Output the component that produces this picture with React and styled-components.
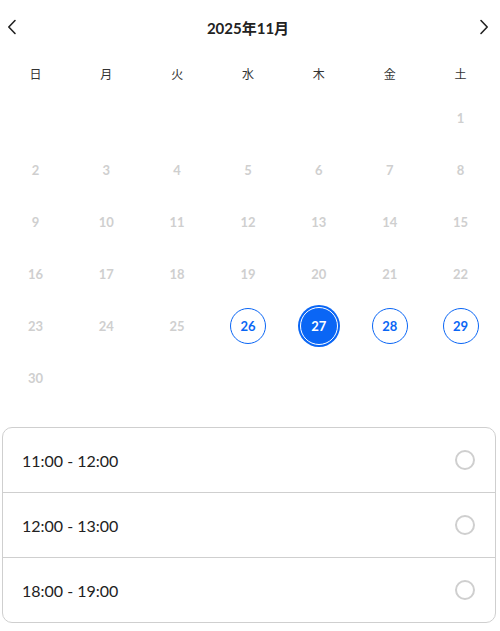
import React, { useState } from "react";
import styled, { createGlobalStyle } from "styled-components";

const GlobalStyle = createGlobalStyle`
  body {
    margin: 0;
    background: #fff;
    font-family: "Lato", "Noto Sans CJK JP", sans-serif;
  }
`;

const Page = styled.div`
  width: 496px;
  padding: 0 2px 0 0;
`;

const Header = styled.div`
  display: flex;
  align-items: center;
  justify-content: space-between;
  height: 54px;
  padding: 0 4px;
`;

const NavButton = styled.button`
  border: none;
  background: none;
  padding: 0;
  width: 16px;
  height: 20px;
  display: flex;
  align-items: center;
  justify-content: center;
  color: #222;
  cursor: pointer;
`;

const Title = styled.div`
  font-size: 15px;
  font-weight: 700;
  color: #222;
`;

const Grid = styled.div`
  display: grid;
  grid-template-columns: repeat(7, 1fr);
`;

const Weekday = styled.div`
  height: 38px;
  display: flex;
  align-items: center;
  justify-content: center;
  font-size: 12px;
  color: #333;
  font-family: "Noto Sans CJK JP", sans-serif;
`;

const Cell = styled.div`
  height: 52px;
  display: flex;
  align-items: center;
  justify-content: center;
`;

const Day = styled.div`
  width: 36px;
  height: 36px;
  box-sizing: border-box;
  border-radius: 50%;
  display: flex;
  align-items: center;
  justify-content: center;
  font-size: 13px;
  font-weight: 700;
  color: ${(p) => (p.$selected ? "#fff" : p.$available ? "#0a66f5" : "#cfcfcf")};
  border: ${(p) => (p.$available ? "1px solid #0a66f5" : "none")};
  background: ${(p) => (p.$selected ? "#0a66f5" : "transparent")};
  ${(p) =>
    p.$selected &&
    `
    width: 38px;
    height: 38px;
    border: 1.5px solid #fff;
    box-shadow: 0 0 0 2px #0a66f5;
  `}
`;

const Slots = styled.div`
  margin: 23px 0 0 2px;
  border: 1px solid #cfcfcf;
  border-radius: 10px;
  overflow: hidden;
`;

const Slot = styled.label`
  display: flex;
  align-items: center;
  justify-content: space-between;
  height: 64px;
  padding: 0 20px 0 19px;
  font-size: 16px;
  color: #222;
  cursor: pointer;
  & + & {
    border-top: 1px solid #cfcfcf;
  }
`;

const Radio = styled.span`
  width: 20px;
  height: 20px;
  box-sizing: border-box;
  border-radius: 50%;
  border: 2px solid ${(p) => (p.$checked ? "#0a66f5" : "#cfcfcf")};
`;

const Chevron = ({ dir }) => (
  <svg width="10" height="16" viewBox="0 0 10 16" fill="none">
    <path
      d={dir === "left" ? "M8 1.5 1.8 8 8 14.5" : "M2 1.5 8.2 8 2 14.5"}
      stroke="currentColor"
      strokeWidth="1.6"
      strokeLinecap="round"
      strokeLinejoin="round"
    />
  </svg>
);

const weekdays = ["日", "月", "火", "水", "木", "金", "土"];
const available = [26, 27, 28, 29];
const times = ["11:00 - 12:00", "12:00 - 13:00", "18:00 - 19:00"];

export default function App() {
  const [selected, setSelected] = useState(27);
  const [slot, setSlot] = useState(null);

  const cells = [];
  for (let i = 0; i < 6; i++) cells.push(null);
  for (let d = 1; d <= 30; d++) cells.push(d);

  return (
    <Page>
      <GlobalStyle />
      <Header>
        <NavButton aria-label="前の月">
          <Chevron dir="left" />
        </NavButton>
        <Title>2025年11月</Title>
        <NavButton aria-label="次の月">
          <Chevron dir="right" />
        </NavButton>
      </Header>
      <Grid>
        {weekdays.map((w) => (
          <Weekday key={w}>{w}</Weekday>
        ))}
        {cells.map((d, i) => (
          <Cell key={i}>
            {d && (
              <Day
                $available={available.includes(d)}
                $selected={d === selected}
                onClick={() => available.includes(d) && setSelected(d)}
              >
                {d}
              </Day>
            )}
          </Cell>
        ))}
      </Grid>
      <Slots>
        {times.map((t) => (
          <Slot key={t} onClick={() => setSlot(t)}>
            {t}
            <Radio $checked={slot === t} />
          </Slot>
        ))}
      </Slots>
    </Page>
  );
}
